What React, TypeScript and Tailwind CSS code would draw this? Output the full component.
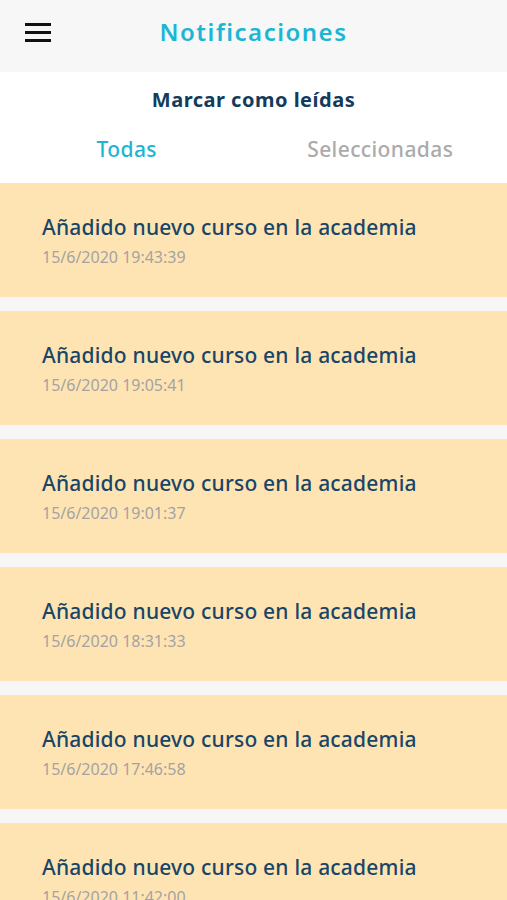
import React from 'react';

const items = [
  '15/6/2020 19:43:39',
  '15/6/2020 19:05:41',
  '15/6/2020 19:01:37',
  '15/6/2020 18:31:33',
  '15/6/2020 17:46:58',
  '15/6/2020 11:42:00',
];

const font = { fontFamily: '"Noto Sans", "Open Sans", sans-serif' };

const App = () => {
  return (
    <div className="w-[507px] h-[900px] overflow-hidden bg-[#f6f6f6]" style={font}>
      {/* Header */}
      <header className="relative h-[72px] bg-[#f7f7f8] flex items-center justify-center pb-[8px]">
        <button className="absolute left-[25px] top-[23px] flex flex-col gap-[5px]">
          <span className="block w-[26px] h-[3px] bg-[#111]" />
          <span className="block w-[26px] h-[3px] bg-[#111]" />
          <span className="block w-[26px] h-[3px] bg-[#111]" />
        </button>
        <h1 className="text-[24px] leading-[30px] font-semibold tracking-[1.5px] text-[#1bb6d4]">Notificaciones</h1>
      </header>

      {/* Actions + tabs */}
      <div className="h-[111px] bg-white flex flex-col">
        <div className="h-[56px] flex items-center justify-center">
          <span className="text-[20px] leading-[28px] font-bold tracking-[0.5px] text-[#133c5c]">Marcar como leídas</span>
        </div>
        <div className="grid grid-cols-2 mt-[6px]">
          <div className="flex justify-center">
            <span className="text-[21px] leading-[30px] font-medium tracking-[0.4px] text-[#1bb6d4]">Todas</span>
          </div>
          <div className="flex justify-center">
            <span className="text-[21px] leading-[30px] font-medium tracking-[0.4px] text-[#ababab]">Seleccionadas</span>
          </div>
        </div>
      </div>

      {/* List */}
      <ul className="flex flex-col gap-[14px]">
        {items.map((d) => (
          <li key={d} className="h-[114px] bg-[#ffe4b3] pl-[42px] pt-[30px]">
            <p className="text-[21px] leading-[28px] font-medium tracking-[0.2px] text-[#1b4566]">
              Añadido nuevo curso en la academia
            </p>
            <p className="mt-[5px] text-[16px] leading-[22px] text-[#a3a3a3]">{d}</p>
          </li>
        ))}
      </ul>
    </div>
  );
};

export default App;
